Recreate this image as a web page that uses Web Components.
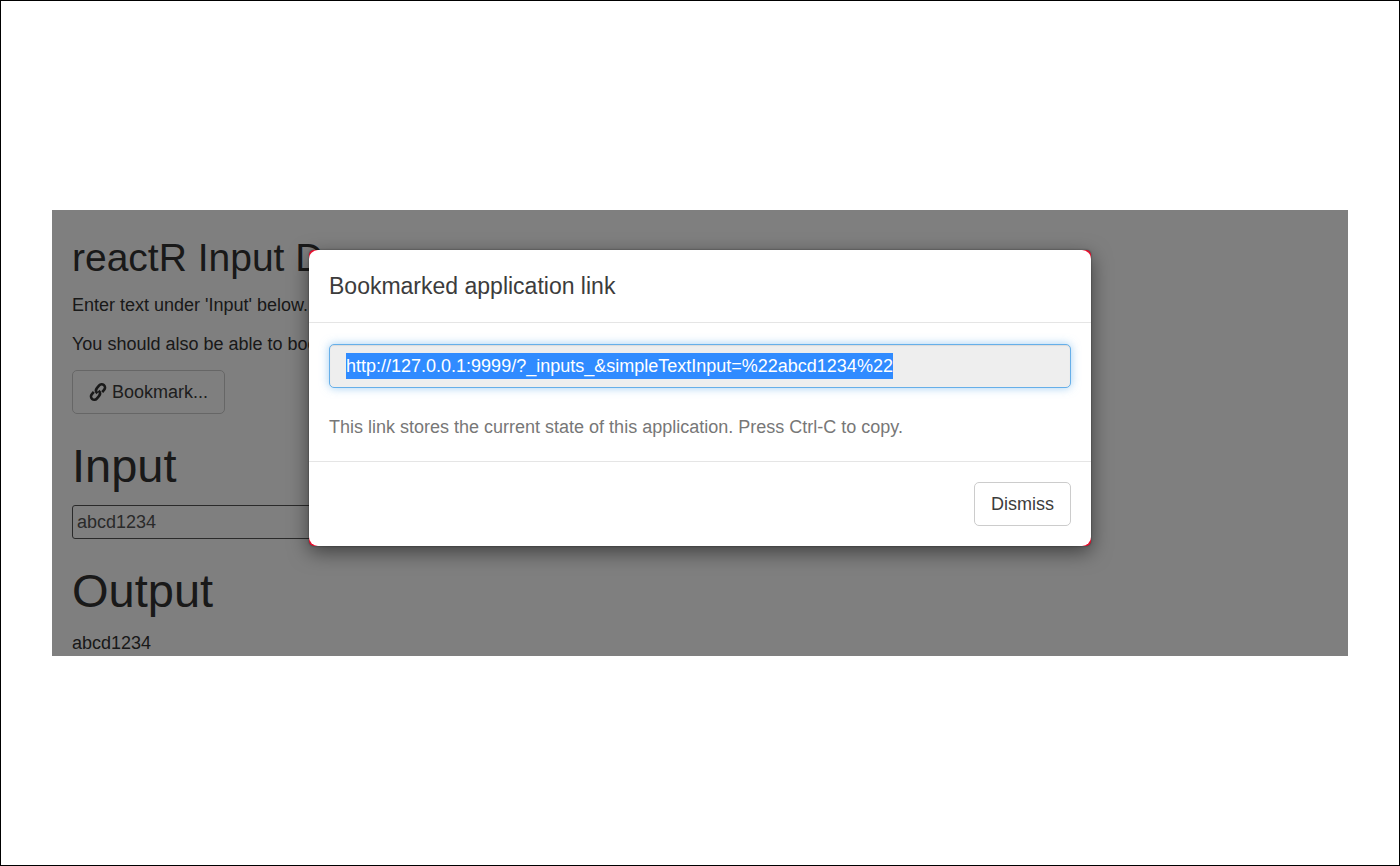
<!DOCTYPE html>
<html lang="en">
<head>
<meta charset="utf-8">
<title>reactR Input Demo</title>
<style>
  body { margin: 0; background: #fff; color: #333; font: 18px/26px "Liberation Sans", Arial, sans-serif; }
</style>
</head>
<body>
<demo-stage>
  <demo-app></demo-app>
  <link-dialog slot="overlay" heading="Bookmarked application link">
    <bookmark-link url="http://127.0.0.1:9999/?_inputs_&amp;simpleTextInput=%22abcd1234%22">This link stores the current state of this application. Press Ctrl-C to copy.</bookmark-link>
    <plain-button slot="footer">Dismiss</plain-button>
  </link-dialog>
</demo-stage>
<script>
  const define = (name, html, setup) => {
    const template = document.createElement('template');
    template.innerHTML = '<style>*{box-sizing:border-box}</style>' + html;
    customElements.define(name, class extends HTMLElement {
      constructor() {
        super();
        this.attachShadow({ mode: 'open' }).append(template.content.cloneNode(true));
      }
      connectedCallback() { if (setup) setup(this, this.shadowRoot); }
    });
  };

  define('plain-button', `
    <style>
      :host { display: inline-block; }
      button { display: flex; align-items: center; gap: 5px; padding: 8px 16px; font: inherit; color: #3c3c3c;
        background: #fff; border: 1px solid #ccc; border-radius: 5px; }
    </style>
    <button type="button"><slot name="icon"></slot><span><slot></slot></span></button>`);

  define('link-icon', `
    <style>:host { display: block; } svg { display: block; }</style>
    <svg width="18" height="20" viewBox="-9 -10 18 20" fill="none" stroke="#333" stroke-width="2.6" aria-hidden="true">
      <g transform="rotate(40)">
        <path d="M3.3 -2.600V-5.800A3.300 3.300 0 0 0 -3.300 -5.800V-2.200C-3.300 0 -1.700 1.300 .4 1.500"/>
        <path d="M-3.300 2.600V5.800A3.300 3.300 0 0 0 3.300 5.800V2.200C3.300 0 1.700 -1.300 -.4 -1.500"/>
      </g>
    </svg>`);

  define('text-field', `
    <style>
      :host { display: block; }
      h1 { margin: 0 0 13px; font-size: 47px; line-height: 52px; font-weight: normal; }
      input { display: block; width: 320px; max-width: 100%; height: 34px; padding: 2px 4px; font: inherit;
        color: #555; background: #fff; border: 1px solid #555; border-radius: 3px; }
    </style>
    <h1><label for="field"></label></h1>
    <input id="field" type="text">`,
    (host, root) => {
      root.querySelector('label').textContent = host.getAttribute('label');
      root.querySelector('input').value = host.getAttribute('value');
    });

  define('demo-app', `
    <style>
      :host { display: flow-root; padding: 0 20px; }
      h2 { margin: 26px 0 13px; font-size: 39px; line-height: 43px; font-weight: normal; }
      h1 { margin: 26px 0 13px; font-size: 47px; line-height: 52px; font-weight: normal; }
      p { margin: 0 0 13px; }
      plain-button { display: block; width: fit-content; }
      text-field { margin-top: 26px; }
    </style>
    <h2>reactR Input Demo</h2>
    <p>Enter text under 'Input' below.</p>
    <p>You should also be able to bookmark.</p>
    <plain-button><link-icon slot="icon"></link-icon>Bookmark...</plain-button>
    <text-field label="Input" value="abcd1234"></text-field>
    <h1>Output</h1>
    <div>abcd1234</div>`);

  define('bookmark-link', `
    <style>
      :host { display: block; }
      textarea { display: block; width: 100%; height: 44px; margin: 0 0 26px; padding: 8px 16px;
        font: inherit; line-height: 26px; color: #555; background: #eee; resize: none; overflow: hidden;
        border: 1px solid #66afe9; border-radius: 5px; outline: 0;
        box-shadow: inset 0 1px 1px rgba(0,0,0,.08), 0 0 10px rgba(102,175,233,.6); }
      textarea::selection { color: #fff; background: rgba(47,139,255,.996); }
      label { display: block; color: #777; }
    </style>
    <textarea id="url" rows="1" readonly></textarea>
    <label for="url"><slot></slot></label>`,
    (host, root) => {
      const field = root.querySelector('textarea');
      field.value = host.getAttribute('url');
      field.focus();
      field.select();
    });

  define('link-dialog', `
    <style>
      :host { display: block; width: 782px; max-width: 100%; }
      section { background: #e8102e; border-radius: 5px; box-shadow: 0 6px 20px rgba(0,0,0,.5), 0 0 2px rgba(0,0,0,.5); }
      header, footer { padding: 20px; background: #fff; }
      header { border-bottom: 1px solid #e5e5e5; border-radius: 9px 9px 0 0; }
      h4 { margin: 0; font-size: 23px; line-height: 32px; font-weight: normal; color: #3c3c3c; }
      .body { padding: 21px 20px; background: #fff; }
      footer { display: flex; justify-content: flex-end; border-top: 1px solid #e5e5e5; border-radius: 0 0 9px 9px; }
    </style>
    <section role="dialog" aria-labelledby="heading">
      <header><h4 id="heading"></h4></header>
      <div class="body"><slot></slot></div>
      <footer><slot name="footer"></slot></footer>
    </section>`,
    (host, root) => { root.querySelector('h4').textContent = host.getAttribute('heading'); });

  define('demo-stage', `
    <style>
      :host { display: flex; align-items: center; min-height: 100vh; padding: 0 51px; border: 1px solid #000; box-sizing: border-box; }
      main { position: relative; flex: 1; min-width: 0; overflow: hidden; }
      .backdrop { position: absolute; inset: 0; display: flex; justify-content: center; align-items: flex-start;
        padding-top: 40px; background: rgba(0,0,0,.5); }
    </style>
    <main>
      <slot></slot>
      <div class="backdrop"><slot name="overlay"></slot></div>
    </main>`);
</script>
</body>
</html>
